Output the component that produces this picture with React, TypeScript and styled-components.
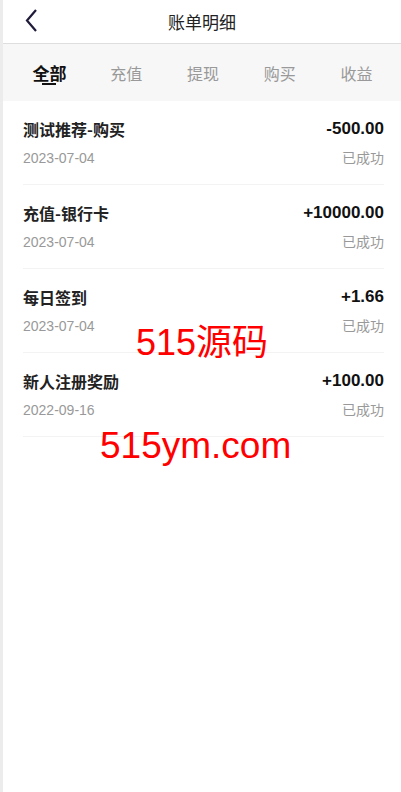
import React, { useState } from 'react'
import styled, { createGlobalStyle } from 'styled-components'

type Bill = {
  title: string
  amount: string
  date: string
  status: string
}

const bills: Bill[] = [
  { title: '测试推荐-购买', amount: '-500.00', date: '2023-07-04', status: '已成功' },
  { title: '充值-银行卡', amount: '+10000.00', date: '2023-07-04', status: '已成功' },
  { title: '每日签到', amount: '+1.66', date: '2023-07-04', status: '已成功' },
  { title: '新人注册奖励', amount: '+100.00', date: '2022-09-16', status: '已成功' },
]

const tabs = ['全部', '充值', '提现', '购买', '收益']

const GlobalStyle = createGlobalStyle`
  html, body {
    margin: 0;
    padding: 0;
    background: #fff;
  }
  body {
    font-family: "Noto Sans CJK SC", "Liberation Sans", sans-serif;
  }
`

const Page = styled.div`
  position: relative;
  min-height: 792px;
  border-left: 3px solid #ececec;
  background: #fff;
`

const Header = styled.div`
  position: relative;
  display: flex;
  align-items: center;
  justify-content: center;
  height: 43px;
  border-bottom: 1px solid #dedede;
  font-size: 17px;
  color: #222;
`

const BackButton = styled.button`
  position: absolute;
  left: 19px;
  top: 8px;
  display: flex;
  padding: 0;
  border: none;
  background: none;
`

const TabBar = styled.div`
  display: grid;
  grid-template-columns: repeat(5, 1fr);
  height: 57px;
  padding: 0 6px 0 8px;
  background: #f7f7f7;
`

const Tab = styled.div<{ $active: boolean }>`
  display: flex;
  align-items: center;
  justify-content: center;
  position: relative;
  font-size: ${(p) => (p.$active ? '17px' : '16px')};
  font-weight: ${(p) => (p.$active ? 700 : 400)};
  color: ${(p) => (p.$active ? '#111' : '#999')};
  &::after {
    content: '';
    display: ${(p) => (p.$active ? 'block' : 'none')};
    position: absolute;
    left: 50%;
    top: 39px;
    width: 14px;
    height: 2px;
    margin-left: -7px;
    background: #111;
  }
`

const List = styled.div`
  padding: 0 17px 0 20px;
`

const Row = styled.div`
  display: grid;
  grid-template-columns: 1fr auto;
  row-gap: 9px;
  padding: 18px 0 16px;
  border-bottom: 1px solid #f3f3f3;
`

const Title = styled.div`
  font-size: 16px;
  font-weight: 700;
  color: #222;
  line-height: 20px;
`

const Amount = styled.div`
  font-family: "Liberation Sans", "Noto Sans CJK SC", sans-serif;
  font-size: 17px;
  font-weight: 700;
  color: #111;
  line-height: 20px;
  text-align: right;
`

const DateText = styled.div`
  font-family: "Liberation Sans", "Noto Sans CJK SC", sans-serif;
  font-size: 14px;
  color: #999;
  line-height: 20px;
`

const Status = styled.div`
  font-family: "Noto Sans CJK SC", sans-serif;
  font-size: 14px;
  color: #999;
  line-height: 18px;
  text-align: right;
`

const Watermark = styled.div<{ $top: number; $left: number; $size: number }>`
  position: absolute;
  top: ${(p) => p.$top}px;
  left: ${(p) => p.$left}px;
  font-family: "Liberation Sans", "Noto Sans CJK SC", sans-serif;
  font-size: ${(p) => p.$size}px;
  line-height: 1;
  color: #f00;
  white-space: nowrap;
`

export default function App() {
  const [active, setActive] = useState(0)

  return (
    <Page>
      <GlobalStyle />
      <Header>
        <BackButton>
          <svg width="20" height="26" viewBox="0 0 20 26">
            <path d="M14 2 L5 12.5 L14 23" fill="none" stroke="#1f1b3a" strokeWidth="2.2" />
          </svg>
        </BackButton>
        账单明细
      </Header>

      <TabBar>
        {tabs.map((tab, index) => {
          return (
            <Tab key={index} $active={index === active} onClick={() => setActive(index)}>
              {tab}
            </Tab>
          )
        })}
      </TabBar>

      <List>
        {bills.map((bill, index) => {
          return (
            <Row key={index}>
              <Title>{bill.title}</Title>
              <Amount>{bill.amount}</Amount>
              <DateText>{bill.date}</DateText>
              <Status>{bill.status}</Status>
            </Row>
          )
        })}
      </List>

      {/* 水印 */}
      <Watermark $top={325} $left={133} $size={36}>515源码</Watermark>
      <Watermark $top={427} $left={97} $size={37}>515ym.com</Watermark>
    </Page>
  )
}
